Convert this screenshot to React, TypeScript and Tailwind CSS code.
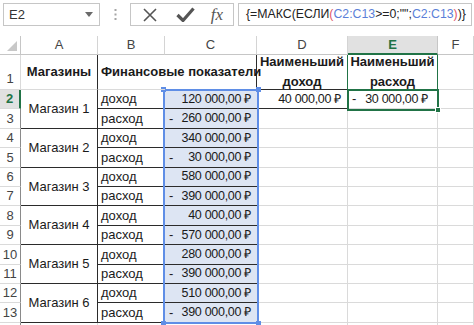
import React from "react";

const stores = [
  { name: "Магазин 1", inc: "120 000,00", exp: "260 000,00" },
  { name: "Магазин 2", inc: "340 000,00", exp: "30 000,00" },
  { name: "Магазин 3", inc: "580 000,00", exp: "390 000,00" },
  { name: "Магазин 4", inc: "40 000,00", exp: "570 000,00" },
  { name: "Магазин 5", inc: "280 000,00", exp: "390 000,00" },
  { name: "Магазин 6", inc: "510 000,00", exp: "390 000,00" },
];

const grid = "border-r border-b border-[#dadada]";
const dark = "border-[#2b2b2b]";

function RowHead({ n, active }: { n?: number; active?: boolean }) {
  return (
    <div
      className={`flex items-center justify-center border-b border-[#dadada] ${
        active
          ? "bg-[#e1e1e1] text-[#217346] font-bold border-r-2 border-r-[#217346]"
          : "text-[#444] border-r border-r-[#8a8a8a]"
      }`}
    >
      {n}
    </div>
  );
}

function Money({ value, neg, pr = "pr-[6px]" }: { value: string; neg?: boolean; pr?: string }) {
  return (
    <div className={`flex h-full w-full items-center justify-between pl-[4px] ${pr}`}>
      <span>{neg ? "-" : ""}</span>
      <span className="text-[12.5px] tracking-[-0.3px]">{value} ₽</span>
    </div>
  );
}

export default function App() {
  const cols = ["A", "B", "C", "D", "E", "F"];
  return (
    <div className="w-[474px] h-[325px] overflow-hidden bg-white text-[13px] text-[#1a1a1a] font-['Liberation_Sans',Arial,sans-serif]">
      {/* formula bar */}
      <div className="flex h-[36px] items-start pt-[3px] pl-[3px]">
        <div className="flex h-[23px] w-[97px] items-center justify-between border border-[#c6c6c6] pl-[5px] pr-[6px] text-[#333]">
          <span>E2</span>
          <svg width="8" height="5" viewBox="0 0 8 5">
            <path d="M0 0h8L4 5z" fill="#6a6a6a" />
          </svg>
        </div>
        <div className="flex w-[30px] h-[23px] items-center justify-center">
          <svg width="3" height="11" viewBox="0 0 3 11">
            <rect x="0.5" y="0" width="2" height="2" fill="#a6a6a6" />
            <rect x="0.5" y="4.5" width="2" height="2" fill="#a6a6a6" />
            <rect x="0.5" y="9" width="2" height="2" fill="#a6a6a6" />
          </svg>
        </div>
        <div className="flex h-[23px] w-[104px] items-center border border-[#c6c6c6]">
          <div className="flex w-[38px] justify-center">
            <svg width="16" height="16" viewBox="0 0 16 16">
              <path d="M2 2l12 12M14 2L2 14" stroke="#555" strokeWidth="1.6" />
            </svg>
          </div>
          <div className="flex w-[32px] justify-center">
            <svg width="19" height="15" viewBox="0 0 19 15">
              <path d="M1.5 8l5.5 5.5L17.5 1.5" stroke="#555" strokeWidth="3.2" fill="none" />
            </svg>
          </div>
          <div className="flex w-[32px] justify-center font-['Liberation_Serif',serif] italic text-[17px] text-[#555]">
            fx
          </div>
        </div>
        <div className="ml-[4px] flex h-[23px] w-[234px] items-center border border-[#c6c6c6] pl-[7px] text-[12.3px] text-[#222] whitespace-nowrap">
          <span>{"{=МАКС(ЕСЛИ"}</span>
          <span className="text-[#e0566a]">(</span>
          <span className="text-[#5b7fd8]">C2:C13</span>
          <span>{'>=0;"";'}</span>
          <span className="text-[#5b7fd8]">C2:C13</span>
          <span className="text-[#e0566a]">)</span>
          <span>{")}"}</span>
        </div>
      </div>

      {/* sheet */}
      <div className="relative">
        <div className="grid grid-cols-[21px_77px_67px_92px_91px_90px_1fr] grid-rows-[19px_35px_repeat(12,19.4px)_20px]">
          {/* column headers */}
          <div className="relative border-r border-b border-[#c6c6c6]">
            <svg className="absolute right-[3px] bottom-[3px]" width="10" height="10" viewBox="0 0 10 10">
              <path d="M10 0v10H0z" fill="#c8c8c8" />
            </svg>
          </div>
          {cols.map((c) =>
            c === "E" ? (
              <div
                key={c}
                className="flex items-center justify-center bg-[#e1e1e1] text-[#217346] font-bold border-r border-r-[#c6c6c6] border-b-2 border-b-[#217346]"
              >
                {c}
              </div>
            ) : (
              <div key={c} className="flex items-center justify-center text-[#444] border-r border-b border-[#d4d4d4] border-b-[#c6c6c6]">
                {c}
              </div>
            )
          )}

          {/* row 1 */}
          <div className="flex items-end justify-center pb-[1px] text-[#444] border-b border-r border-[#dadada]">1</div>
          <div className={`flex items-center justify-center font-bold border-b border-b-[#dadada] border-r ${dark}`}>
            Магазины
          </div>
          <div className="relative z-10 flex items-center pl-[3px] font-bold whitespace-nowrap border-b border-[#dadada] overflow-visible">
            Финансовые показатели
          </div>
          <div className={`border-b border-r ${dark}`} />
          <div className="flex items-center justify-center overflow-hidden border-b border-b-[#2b2b2b] border-r border-r-[#217346] font-bold text-center leading-[20px]">
            Наименьший доход
          </div>
          <div className="flex items-center justify-center overflow-hidden border-r border-b border-[#217346] font-bold text-center leading-[20px]">
            Наименьший расход
          </div>
          <div className={grid} />

          {/* rows 2-13 */}
          {stores.map((s, i) => {
            const r = 2 + i * 2;
            const first = i === 0;
            return (
              <React.Fragment key={s.name}>
                <RowHead n={r} active={first} />
                <div className={`row-span-2 flex items-center justify-center border-b border-r ${dark}`}>{s.name}</div>
                <div className={`flex items-center pl-[3px] border-b ${dark}`}>доход</div>
                <div className={`bg-[#dde5f3] border-b ${dark}`}>
                  <Money value={s.inc} />
                </div>
                {first ? (
                  <div className={`border-b border-r ${dark} border-r-[#217346]`}>
                    <Money value="40 000,00" />
                  </div>
                ) : (
                  <div className={grid} />
                )}
                {first ? (
                  <div className={grid}>
                    <Money value="30 000,00" neg pr="pr-[9px]" />
                  </div>
                ) : (
                  <div className={grid} />
                )}
                <div className={grid} />

                <RowHead n={r + 1} />
                <div className={`flex items-center pl-[3px] border-b ${dark}`}>расход</div>
                <div className={`bg-[#dde5f3] border-b ${dark}`}>
                  <Money value={s.exp} neg />
                </div>
                <div className={grid} />
                <div className={grid} />
                <div className={grid} />
              </React.Fragment>
            );
          })}
          <RowHead />
          <div className={grid} />
          <div className={grid} />
          <div className={grid} />
          <div className={grid} />
          <div className={grid} />
          <div className={grid} />
        </div>

        {/* formula range highlight C2:C13 */}
        <div className="absolute left-[163px] top-[53px] w-[96px] h-[235px] border-2 border-[#5f8ee6]" />
        <div className="absolute left-[161px] top-[51px] w-[5px] h-[5px] bg-[#5f8ee6]" />
        <div className="absolute left-[256px] top-[51px] w-[5px] h-[5px] bg-[#5f8ee6]" />
        <div className="absolute left-[161px] top-[285px] w-[5px] h-[5px] bg-[#5f8ee6]" />
        <div className="absolute left-[256px] top-[285px] w-[5px] h-[5px] bg-[#5f8ee6]" />

        {/* active cell E2 */}
        <div className="absolute left-[347px] top-[53px] w-[92px] h-[22px] border-2 border-[#217346]" />
        <div className="absolute left-[435px] top-[71px] w-[6px] h-[6px] bg-[#217346] border border-white" />
      </div>
    </div>
  );
}
